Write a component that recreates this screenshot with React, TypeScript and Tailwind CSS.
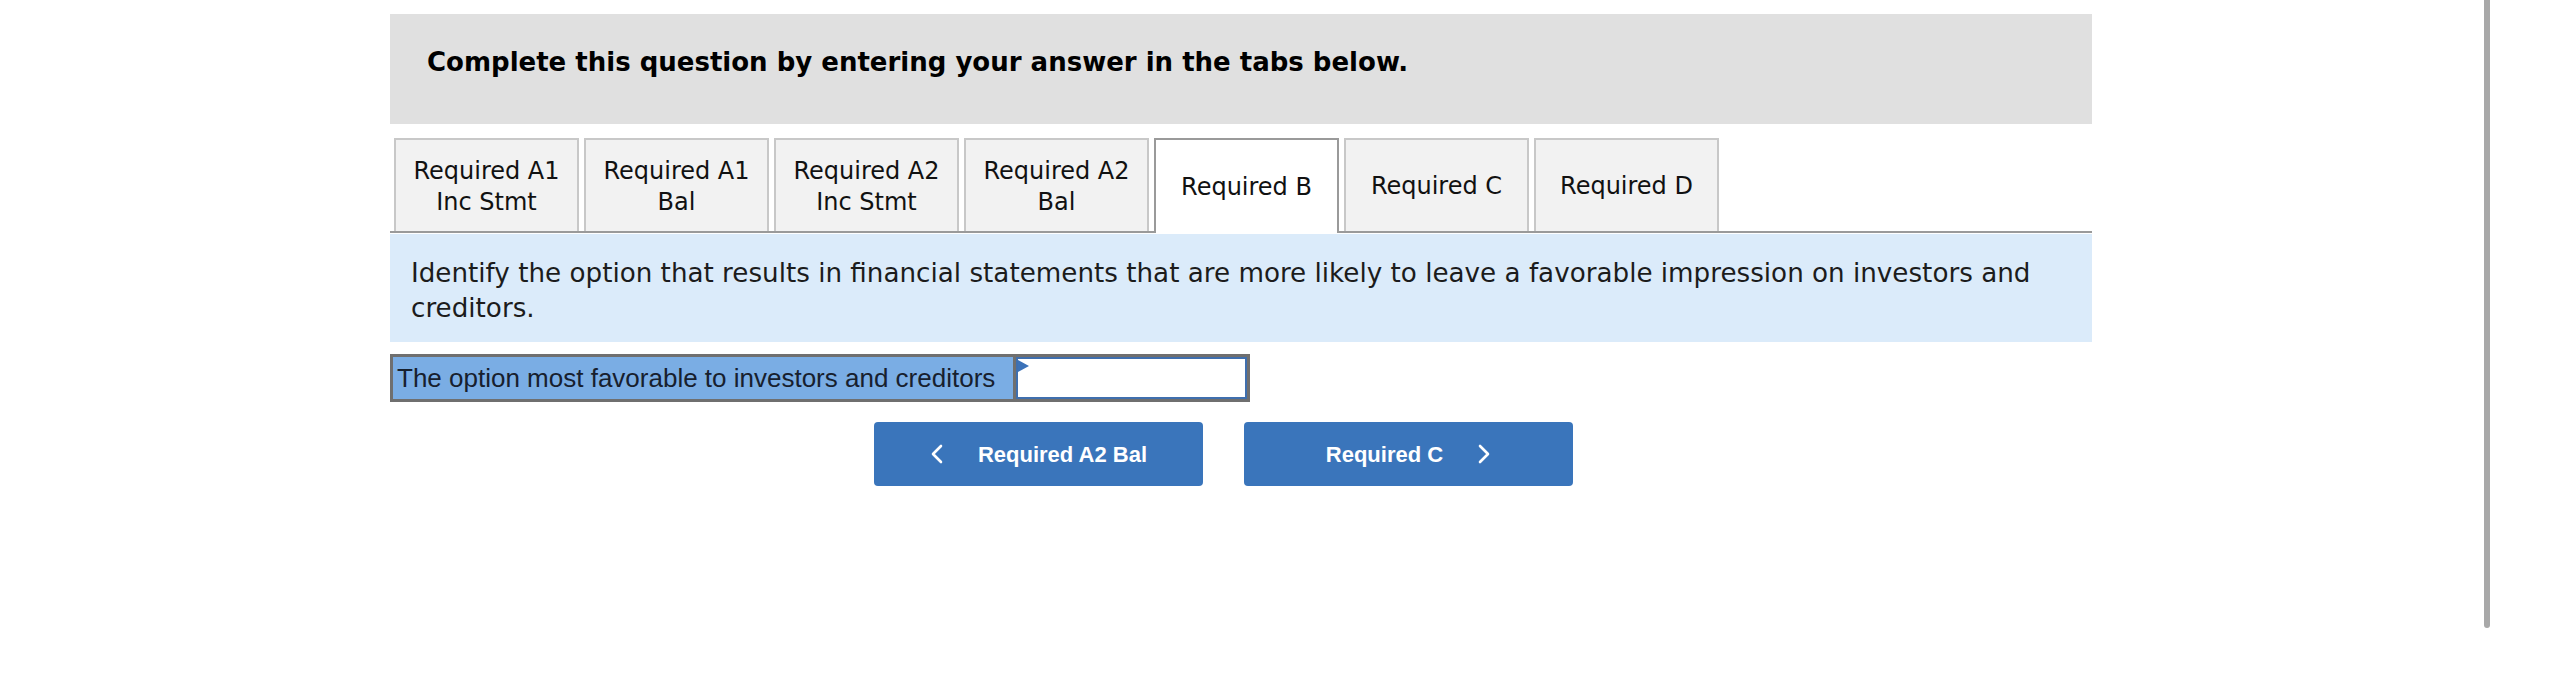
import React from "react";

const tabs = [
  ["Required A1", "Inc Stmt"],
  ["Required A1", "Bal"],
  ["Required A2", "Inc Stmt"],
  ["Required A2", "Bal"],
  ["Required B"],
  ["Required C"],
  ["Required D"],
];

function ChevLeft() {
  return (
    <svg width="14" height="20" viewBox="0 0 14 20" fill="none">
      <polyline points="11,2 3,10 11,18" stroke="white" strokeWidth="2.6" strokeLinecap="round" strokeLinejoin="round" />
    </svg>
  );
}
function ChevRight() {
  return (
    <svg width="14" height="20" viewBox="0 0 14 20" fill="none">
      <polyline points="3,2 11,10 3,18" stroke="white" strokeWidth="2.6" strokeLinecap="round" strokeLinejoin="round" />
    </svg>
  );
}

export default function App() {
  const verdana = { fontFamily: '"DejaVu Sans", Verdana, sans-serif' };
  return (
    <div className="w-[2574px] h-[685px] bg-white flex overflow-hidden">
      <div className="w-[390px] shrink-0" />
      <div className="w-[1702px] shrink-0 pt-[14px] flex flex-col">
        {/* header */}
        <div className="h-[110px] bg-[#e0e0e0] pl-[37px] pt-[32px]">
          <div className="text-[26px] leading-[32px] font-bold text-black" style={verdana}>
            Complete this question by entering your answer in the tabs below.
          </div>
        </div>
        {/* tabs */}
        <div className="mt-[14px] flex items-end gap-[5px] pl-[4px] border-b-2 border-[#9a9a9a]" style={verdana}>
          {tabs.map((t, i) => {
            const active = i === 4;
            return (
              <div
                key={i}
                className={
                  active
                    ? "relative z-10 -mb-[2px] h-[95px] w-[185px] pt-[2px] border-2 border-b-0 border-[#9a9a9a] bg-white flex flex-col items-center justify-center text-center text-[24px] leading-[31px] text-[#111]"
                    : "h-[93px] w-[185px] pt-[2px] border-2 border-b-0 border-[#c8c8c8] bg-[#f2f2f2] flex flex-col items-center justify-center text-center text-[24px] leading-[31px] text-[#111]"
                }
              >
                {t.map((l, j) => (
                  <div key={j}>{l}</div>
                ))}
              </div>
            );
          })}
        </div>
        {/* instruction band */}
        <div className="mt-[1px] bg-[#dbebfa] pl-[21px] pr-[30px] pt-[22px] pb-[16px]">
          <div className="text-[26.2px] leading-[35px] text-[#1c1c1c]" style={verdana}>
            Identify the option that results in financial statements that are more likely to leave a favorable impression on investors and creditors.
          </div>
        </div>
        {/* answer row */}
        <div className="mt-[12px] w-[860px] h-[48px] border-[3px] border-[#6f6f6f] flex">
          <div
            className="w-[620px] h-full bg-[#7aade4] pl-[4px] flex items-center text-[26px] text-[#17202e]"
            style={{ fontFamily: '"Liberation Sans", Arial, sans-serif' }}
          >
            The option most favorable to investors and creditors
          </div>
          <div className="w-[3px] h-full bg-[#6f6f6f]" />
          <div className="relative flex-1 h-full bg-white border-2 border-[#3f6fae]">
            <svg className="absolute left-0 top-[1px]" width="11" height="12" viewBox="0 0 11 12">
              <polygon points="0,0 11,6 0,12" fill="#3b72b8" />
            </svg>
          </div>
        </div>
        {/* buttons */}
        <div className="mt-[20px] flex gap-[41px] pl-[484px]" style={{ fontFamily: '"Liberation Sans", Arial, sans-serif' }}>
          <button className="w-[329px] h-[64px] rounded-[4px] bg-[#3a75bb] flex items-center justify-center gap-[34px] text-white text-[22px] font-bold">
            <ChevLeft />
            <span>Required A2 Bal</span>
          </button>
          <button className="w-[329px] h-[64px] rounded-[4px] bg-[#3a75bb] flex items-center justify-center gap-[34px] text-white text-[22px] font-bold">
            <span>Required C</span>
            <ChevRight />
          </button>
        </div>
      </div>
      <div className="w-[392px] shrink-0" />
      <div className="w-[6px] h-[628px] shrink-0 bg-[#a8a8a8] rounded-b-[3px]" />
    </div>
  );
}
